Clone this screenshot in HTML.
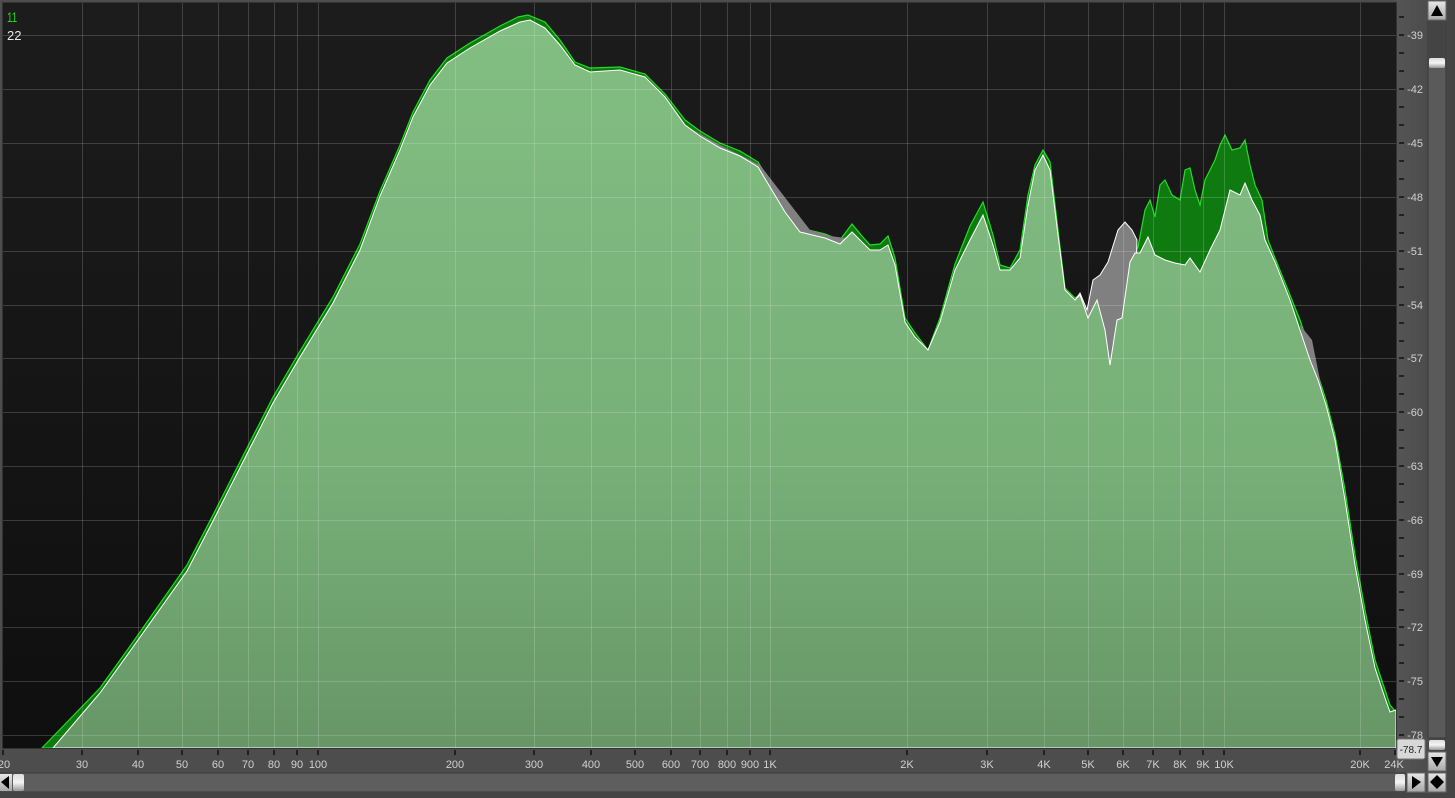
<!DOCTYPE html>
<html><head><meta charset="utf-8"><style>
html,body{margin:0;padding:0;background:#4a4a4a;width:1455px;height:798px;overflow:hidden;font-family:"Liberation Sans",sans-serif}
</style></head><body>
<svg width="1455" height="798" viewBox="0 0 1455 798" xmlns="http://www.w3.org/2000/svg" font-family="Liberation Sans, sans-serif">
<defs>
<linearGradient id="bg" x1="0" y1="0" x2="0" y2="1"><stop offset="0" stop-color="#1c1c1c"/><stop offset="1" stop-color="#0f0f0f"/></linearGradient>
<linearGradient id="lf" x1="0" y1="0" x2="0" y2="1"><stop offset="0" stop-color="#82be82"/><stop offset="0.6" stop-color="#78b078"/><stop offset="1" stop-color="#679667"/></linearGradient>
<linearGradient id="frame" x1="0" y1="0" x2="1" y2="0"><stop offset="0" stop-color="#555"/><stop offset="1" stop-color="#444"/></linearGradient>
<linearGradient id="btn" x1="0" y1="0" x2="0" y2="1"><stop offset="0" stop-color="#e8e8e8"/><stop offset="1" stop-color="#a8a8a8"/></linearGradient>
<linearGradient id="thumb" x1="0" y1="0" x2="0" y2="1"><stop offset="0" stop-color="#ddd"/><stop offset="0.5" stop-color="#f4f4f4"/><stop offset="1" stop-color="#999"/></linearGradient>
</defs>
<rect x="0" y="0" width="1455" height="798" fill="#4d4d4d"/>
<rect x="1396" y="0" width="59" height="798" fill="url(#frame)"/>
<rect x="3" y="3" width="1393" height="745" fill="url(#bg)"/>

<!-- green spectrum -->
<polygon fill="#0f7a0f" stroke="#22dd22" stroke-width="1.2" points="42,748 100,688 133,642 187,565 213,515 250,442 273,397 300,351 333,297 360,244 380,191 400,145 413,112 430,80 447,58 470,43 500,26 518,17 528,15 545,22 560,40 575,62 590,68 620,67 645,74 665,94 685,120 700,131 720,143 740,151 758,162 770,182 785,208 800,228 825,234 840,240 852,224 862,236 870,245 880,244 888,236 895,258 905,318 915,333 928,350 940,318 955,264 970,226 983,202 993,235 1000,265 1010,268 1020,250 1028,195 1035,165 1043,150 1050,162 1058,230 1065,288 1075,298 1080,295 1088,318 1097,300 1105,330 1110,365 1117,320 1122,318 1130,260 1138,247 1145,210 1150,200 1155,217 1160,185 1165,180 1172,195 1180,200 1185,170 1190,168 1195,190 1200,205 1205,180 1215,160 1220,145 1225,135 1232,150 1240,148 1245,140 1250,165 1255,185 1262,200 1268,240 1275,258 1290,295 1300,320 1310,350 1318,375 1326,400 1335,435 1345,490 1355,555 1365,610 1375,660 1385,690 1390,705 1396,712 1396,748"/>
<!-- grey spectrum -->
<polygon fill="#808080" stroke="#fff" stroke-width="1" points="1075,300 1080,293 1087,310 1093,280 1100,275 1108,262 1118,230 1125,222 1132,230 1137,240 1135,300 1110,365 1090,320"/>
<polygon fill="#808080" points="690,128 720,145 760,165 810,230 830,236 845,238 860,250 855,255 800,235 760,175 700,135"/>
<polygon fill="#808080" points="1300,325 1312,340 1325,405 1318,400 1305,350"/>
<!-- light combined -->
<polygon fill="url(#lf)" stroke="#ffffff" stroke-width="1" points="53,748 100,693 133,647 187,571 213,521 250,448 273,403 300,357 333,303 360,250 380,196 400,150 413,117 430,85 447,63 470,48 500,31 520,22 530,20 545,28 560,45 575,65 590,72 620,70 645,77 665,97 685,125 700,136 720,148 740,156 758,167 770,187 785,212 800,232 825,238 840,244 852,232 862,242 870,250 880,250 888,245 895,265 905,322 915,337 928,350 940,322 955,270 970,240 983,215 993,245 1000,270 1010,270 1020,258 1028,205 1035,170 1043,155 1050,170 1058,235 1065,290 1075,300 1080,295 1088,318 1097,300 1105,330 1110,365 1117,320 1122,318 1130,262 1135,253 1140,253 1148,237 1155,255 1165,260 1175,263 1185,265 1190,258 1200,272 1210,250 1220,230 1230,190 1240,195 1245,183 1252,200 1260,215 1265,240 1275,262 1290,300 1300,330 1310,360 1318,380 1326,405 1335,440 1345,500 1355,565 1365,620 1375,668 1385,698 1390,712 1396,710 1396,748"/>

<!-- grid -->
<g stroke="rgba(255,255,255,0.17)" stroke-width="1">
<line x1="3" y1="35.5" x2="1396" y2="35.5"/><line x1="3" y1="89.5" x2="1396" y2="89.5"/><line x1="3" y1="143.5" x2="1396" y2="143.5"/><line x1="3" y1="197.5" x2="1396" y2="197.5"/><line x1="3" y1="251.5" x2="1396" y2="251.5"/><line x1="3" y1="305.5" x2="1396" y2="305.5"/><line x1="3" y1="358.5" x2="1396" y2="358.5"/><line x1="3" y1="412.5" x2="1396" y2="412.5"/><line x1="3" y1="466.5" x2="1396" y2="466.5"/><line x1="3" y1="520.5" x2="1396" y2="520.5"/><line x1="3" y1="574.5" x2="1396" y2="574.5"/><line x1="3" y1="627.5" x2="1396" y2="627.5"/><line x1="3" y1="681.5" x2="1396" y2="681.5"/><line x1="3" y1="735.5" x2="1396" y2="735.5"/>
<line x1="82.5" y1="3" x2="82.5" y2="748"/><line x1="138.5" y1="3" x2="138.5" y2="748"/><line x1="182.5" y1="3" x2="182.5" y2="748"/><line x1="218.5" y1="3" x2="218.5" y2="748"/><line x1="248.5" y1="3" x2="248.5" y2="748"/><line x1="274.5" y1="3" x2="274.5" y2="748"/><line x1="297.5" y1="3" x2="297.5" y2="748"/><line x1="318.5" y1="3" x2="318.5" y2="748"/><line x1="455.5" y1="3" x2="455.5" y2="748"/><line x1="534.5" y1="3" x2="534.5" y2="748"/><line x1="591.5" y1="3" x2="591.5" y2="748"/><line x1="635.5" y1="3" x2="635.5" y2="748"/><line x1="671.5" y1="3" x2="671.5" y2="748"/><line x1="700.5" y1="3" x2="700.5" y2="748"/><line x1="727.5" y1="3" x2="727.5" y2="748"/><line x1="750.5" y1="3" x2="750.5" y2="748"/><line x1="770.5" y1="3" x2="770.5" y2="748"/><line x1="907.5" y1="3" x2="907.5" y2="748"/><line x1="987.5" y1="3" x2="987.5" y2="748"/><line x1="1044.5" y1="3" x2="1044.5" y2="748"/><line x1="1088.5" y1="3" x2="1088.5" y2="748"/><line x1="1123.5" y1="3" x2="1123.5" y2="748"/><line x1="1153.5" y1="3" x2="1153.5" y2="748"/><line x1="1180.5" y1="3" x2="1180.5" y2="748"/><line x1="1203.5" y1="3" x2="1203.5" y2="748"/><line x1="1224.5" y1="3" x2="1224.5" y2="748"/><line x1="1360.5" y1="3" x2="1360.5" y2="748"/>
</g>
<rect x="2.5" y="2.5" width="1394" height="746" fill="none" stroke="#333" stroke-width="1"/>

<text x="7" y="22" font-size="14" fill="#22dd22" transform="translate(7 0) scale(0.7 1) translate(-7 0)">11</text>
<text x="7" y="40" font-size="13" fill="#e8e8e8">22</text>

<!-- right scale -->
<g stroke="#111" stroke-width="1.5">
<line x1="1399" y1="17" x2="1404" y2="17"/><line x1="1399" y1="35" x2="1404" y2="35"/><line x1="1399" y1="53" x2="1404" y2="53"/><line x1="1399" y1="71" x2="1404" y2="71"/><line x1="1399" y1="89" x2="1404" y2="89"/><line x1="1399" y1="107" x2="1404" y2="107"/><line x1="1399" y1="125" x2="1404" y2="125"/><line x1="1399" y1="143" x2="1404" y2="143"/><line x1="1399" y1="161" x2="1404" y2="161"/><line x1="1399" y1="179" x2="1404" y2="179"/><line x1="1399" y1="197" x2="1404" y2="197"/><line x1="1399" y1="215" x2="1404" y2="215"/><line x1="1399" y1="233" x2="1404" y2="233"/><line x1="1399" y1="251" x2="1404" y2="251"/><line x1="1399" y1="269" x2="1404" y2="269"/><line x1="1399" y1="287" x2="1404" y2="287"/><line x1="1399" y1="305" x2="1404" y2="305"/><line x1="1399" y1="323" x2="1404" y2="323"/><line x1="1399" y1="341" x2="1404" y2="341"/><line x1="1399" y1="358" x2="1404" y2="358"/><line x1="1399" y1="376" x2="1404" y2="376"/><line x1="1399" y1="394" x2="1404" y2="394"/><line x1="1399" y1="412" x2="1404" y2="412"/><line x1="1399" y1="430" x2="1404" y2="430"/><line x1="1399" y1="448" x2="1404" y2="448"/><line x1="1399" y1="466" x2="1404" y2="466"/><line x1="1399" y1="484" x2="1404" y2="484"/><line x1="1399" y1="502" x2="1404" y2="502"/><line x1="1399" y1="520" x2="1404" y2="520"/><line x1="1399" y1="538" x2="1404" y2="538"/><line x1="1399" y1="556" x2="1404" y2="556"/><line x1="1399" y1="574" x2="1404" y2="574"/><line x1="1399" y1="592" x2="1404" y2="592"/><line x1="1399" y1="610" x2="1404" y2="610"/><line x1="1399" y1="627" x2="1404" y2="627"/><line x1="1399" y1="645" x2="1404" y2="645"/><line x1="1399" y1="663" x2="1404" y2="663"/><line x1="1399" y1="681" x2="1404" y2="681"/><line x1="1399" y1="699" x2="1404" y2="699"/><line x1="1399" y1="717" x2="1404" y2="717"/><line x1="1399" y1="735" x2="1404" y2="735"/>
</g>
<g font-size="11" fill="#d0d0d0" text-anchor="end">
<text x="1423" y="39">-39</text><text x="1423" y="93">-42</text><text x="1423" y="147">-45</text><text x="1423" y="201">-48</text><text x="1423" y="255">-51</text><text x="1423" y="309">-54</text><text x="1423" y="362">-57</text><text x="1423" y="416">-60</text><text x="1423" y="470">-63</text><text x="1423" y="524">-66</text><text x="1423" y="578">-69</text><text x="1423" y="631">-72</text><text x="1423" y="685">-75</text><text x="1423" y="739">-78</text>
</g>
<!-- vertical scrollbar -->
<rect x="1428" y="20" width="18" height="718" fill="#5a5a5a" stroke="#3a3a3a"/>
<rect x="1428" y="20" width="18" height="40" fill="#444"/>
<rect x="1428" y="1" width="18" height="19" fill="url(#btn)" stroke="#666"/>
<polygon points="1431,16 1443,16 1437,5" fill="#000"/>
<rect x="1429" y="58" width="16" height="10" rx="2" fill="url(#thumb)"/>
<rect x="1429" y="740" width="16" height="10" rx="2" fill="url(#thumb)"/>
<rect x="1428" y="752" width="18" height="19" fill="url(#btn)" stroke="#666"/>
<polygon points="1431,757 1443,757 1437,767" fill="#000"/>
<rect x="1397" y="739" width="28" height="20" rx="2" fill="#d8d8d8" stroke="#777"/>
<text x="1411" y="753" font-size="10" fill="#222" text-anchor="middle">-78.7</text>

<!-- bottom axis -->
<g stroke="#111" stroke-width="1.5">
<line x1="3" y1="750" x2="3" y2="755"/><line x1="82" y1="750" x2="82" y2="755"/><line x1="138" y1="750" x2="138" y2="755"/><line x1="182" y1="750" x2="182" y2="755"/><line x1="218" y1="750" x2="218" y2="755"/><line x1="248" y1="750" x2="248" y2="755"/><line x1="274" y1="750" x2="274" y2="755"/><line x1="297" y1="750" x2="297" y2="755"/><line x1="318" y1="750" x2="318" y2="755"/><line x1="455" y1="750" x2="455" y2="755"/><line x1="534" y1="750" x2="534" y2="755"/><line x1="591" y1="750" x2="591" y2="755"/><line x1="635" y1="750" x2="635" y2="755"/><line x1="671" y1="750" x2="671" y2="755"/><line x1="700" y1="750" x2="700" y2="755"/><line x1="727" y1="750" x2="727" y2="755"/><line x1="750" y1="750" x2="750" y2="755"/><line x1="770" y1="750" x2="770" y2="755"/><line x1="907" y1="750" x2="907" y2="755"/><line x1="987" y1="750" x2="987" y2="755"/><line x1="1044" y1="750" x2="1044" y2="755"/><line x1="1088" y1="750" x2="1088" y2="755"/><line x1="1123" y1="750" x2="1123" y2="755"/><line x1="1153" y1="750" x2="1153" y2="755"/><line x1="1180" y1="750" x2="1180" y2="755"/><line x1="1203" y1="750" x2="1203" y2="755"/><line x1="1224" y1="750" x2="1224" y2="755"/><line x1="1360" y1="750" x2="1360" y2="755"/><line x1="1395" y1="750" x2="1395" y2="755"/>
</g>
<g font-size="11" fill="#d0d0d0" text-anchor="middle">
<text x="4" y="768">20</text><text x="82" y="768">30</text><text x="138" y="768">40</text><text x="182" y="768">50</text><text x="218" y="768">60</text><text x="248" y="768">70</text><text x="274" y="768">80</text><text x="297" y="768">90</text><text x="318" y="768">100</text><text x="455" y="768">200</text><text x="534" y="768">300</text><text x="591" y="768">400</text><text x="635" y="768">500</text><text x="671" y="768">600</text><text x="700" y="768">700</text><text x="727" y="768">800</text><text x="750" y="768">900</text><text x="770" y="768">1K</text><text x="907" y="768">2K</text><text x="987" y="768">3K</text><text x="1044" y="768">4K</text><text x="1088" y="768">5K</text><text x="1123" y="768">6K</text><text x="1153" y="768">7K</text><text x="1180" y="768">8K</text><text x="1203" y="768">9K</text><text x="1224" y="768">10K</text><text x="1360" y="768">20K</text><text x="1394" y="768">24K</text>
</g>
<!-- horizontal scrollbar -->
<rect x="0" y="773" width="1406" height="19" fill="#5e5e5e" stroke="#3a3a3a"/>
<rect x="0" y="774" width="12" height="17" fill="url(#btn)"/>
<polygon points="9,776 9,789 1,782" fill="#000"/>
<rect x="13" y="774" width="11" height="17" rx="2" fill="url(#thumb)"/>
<rect x="1395" y="774" width="10" height="17" rx="2" fill="url(#thumb)"/>
<rect x="1407" y="773" width="18" height="19" fill="url(#btn)" stroke="#666"/>
<polygon points="1412,776 1412,789 1421,782" fill="#000"/>
<rect x="1428" y="773" width="18" height="19" fill="url(#btn)" stroke="#666"/>
<polygon points="1437,775 1444,782 1437,789 1430,782" fill="#000"/>
<rect x="0" y="793" width="1455" height="5" fill="#444"/>
</svg>
</body></html>
